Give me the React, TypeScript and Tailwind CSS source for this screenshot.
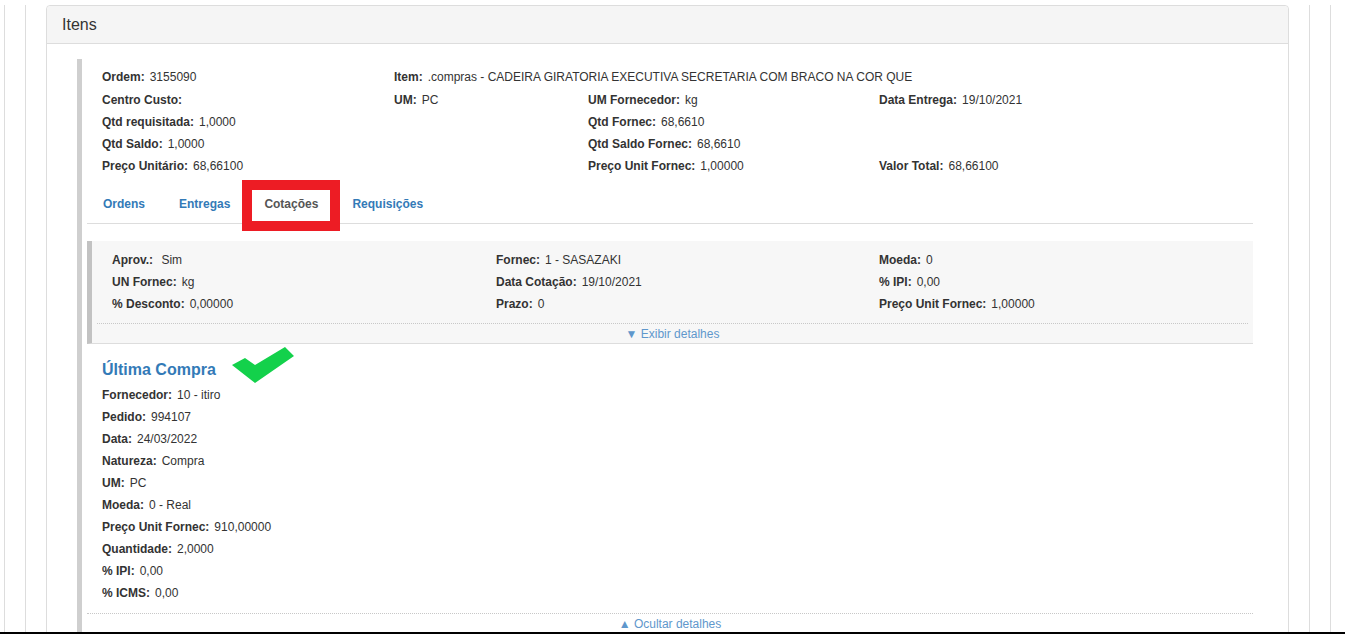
import React from 'react';

type Field = { label: string; value?: string; tall?: boolean };

const Item: React.FC<Field> = ({ label, value, tall }) => (
  <div className={`${tall ? 'h-[23px] leading-[22px]' : 'h-[22px] leading-[22px]'} whitespace-nowrap`}>
    <span className="font-bold">{label}</span>
    {value !== undefined && <span className="ml-[5px]">{value}</span>}
  </div>
);

const Empty = () => <div className="h-[22px]" />;

const tabs = ['Ordens', 'Entregas', 'Cotações', 'Requisições'];

const ultimaCompra: Field[] = [
  { label: 'Fornecedor:', value: '10 - itiro' },
  { label: 'Pedido:', value: '994107' },
  { label: 'Data:', value: '24/03/2022' },
  { label: 'Natureza:', value: 'Compra' },
  { label: 'UM:', value: 'PC' },
  { label: 'Moeda:', value: '0 - Real' },
  { label: 'Preço Unit Fornec:', value: '910,00000' },
  { label: 'Quantidade:', value: '2,0000' },
  { label: '% IPI:', value: '0,00' },
  { label: '% ICMS:', value: '0,00' },
];

export default function App() {
  return (
    <div
      className="h-[634px] flex flex-col overflow-hidden bg-white text-[12px] text-[#333]"
      style={{ fontFamily: '"Liberation Sans", Arial, sans-serif' }}
    >
      <div className="flex-1 min-h-0 overflow-hidden">
        <div className="ml-[4px] w-[1327px] h-full border-x border-[#ddd]">
          <div className="ml-[20px] w-[1285px] h-full border-x border-[#ddd]">
            <div className="mx-[20px] mt-[5px] border border-[#ddd] rounded-t-[4px]">
              {/* cabeçalho */}
              <div className="h-[38px] bg-[#f5f5f5] border-b border-[#ddd] px-[15px] flex items-center text-[16px] rounded-t-[4px]">
                Itens
              </div>

              <div className="pt-[15px] pl-[30px] pr-[35px]">
                <div className="border-l-[5px] border-[#cfcfcf]">
                  {/* dados do item */}
                  <div className="pl-[20px] pt-[7px] grid grid-cols-[292px_194px_291px_1fr]">
                    <Item label="Ordem:" value="3155090" tall />
                    <div className="col-span-3">
                      <Item label="Item:" value=".compras - CADEIRA GIRATORIA EXECUTIVA SECRETARIA COM BRACO NA COR QUE" tall />
                    </div>
                    <Item label="Centro Custo:" />
                    <Item label="UM:" value="PC" />
                    <Item label="UM Fornecedor:" value="kg" />
                    <Item label="Data Entrega:" value="19/10/2021" />
                    <Item label="Qtd requisitada:" value="1,0000" />
                    <Empty />
                    <Item label="Qtd Fornec:" value="68,6610" />
                    <Empty />
                    <Item label="Qtd Saldo:" value="1,0000" />
                    <Empty />
                    <Item label="Qtd Saldo Fornec:" value="68,6610" />
                    <Empty />
                    <Item label="Preço Unitário:" value="68,66100" />
                    <Empty />
                    <Item label="Preço Unit Fornec:" value="1,00000" />
                    <Item label="Valor Total:" value="68,66100" />
                  </div>

                  {/* abas */}
                  <div className="ml-[5px] mt-[8px] flex border-b border-[#ddd]">
                    {tabs.map((t) => {
                      const active = t === 'Cotações';
                      return (
                        <div
                          key={t}
                          className={`relative h-[38px] leading-[36px] px-[15px] mr-[2px] border border-transparent font-bold ${
                            active ? 'text-[#555] bg-white' : 'text-[#337ab7]'
                          }`}
                        >
                          {t}
                          {active && (
                            <div className="absolute left-[-7px] right-[-7px] top-[-6px] bottom-[-9px] border-[10px] border-[#ed1c24]" />
                          )}
                        </div>
                      );
                    })}
                  </div>

                  {/* cotação */}
                  <div className="ml-[5px] mt-[17px] bg-[#f7f7f7] border-l-[5px] border-l-[#c2c2c2] border-b border-b-[#ddd]">
                    <div className="pl-[20px] pt-[8px] grid grid-cols-[384px_383px_1fr]">
                      <Item label="Aprov.:" value={'\u00a0Sim'} />
                      <Item label="Fornec:" value="1 - SASAZAKI" />
                      <Item label="Moeda:" value="0" />
                      <Item label="UN Fornec:" value="kg" />
                      <Item label="Data Cotação:" value="19/10/2021" />
                      <Item label="% IPI:" value="0,00" />
                      <Item label="% Desconto:" value="0,00000" />
                      <Item label="Prazo:" value="0" />
                      <Item label="Preço Unit Fornec:" value="1,00000" />
                    </div>
                    <div className="mx-[5px] mt-[8px] border-t border-dotted border-[#c8c8c8]" />
                    <div className="h-[19px] leading-[21px] text-center text-[#5f97cc]">▼ Exibir detalhes</div>
                  </div>

                  {/* última compra */}
                  <div className="pl-[20px]">
                    <div className="relative mt-[16px] mb-[4px] h-[20px] leading-[20px] text-[16px] font-bold text-[#337ab7]">
                      Última Compra
                      <svg
                        className="absolute left-[129px] top-[-14px]"
                        width="64"
                        height="38"
                        viewBox="0 0 64 38"
                      >
                        <polygon points="1,19 14,12 24,19 54,1 63,10 24,37" fill="#13d14b" />
                      </svg>
                    </div>
                    {ultimaCompra.map((f) => (
                      <Item key={f.label} label={f.label} value={f.value} />
                    ))}
                  </div>
                  <div className="ml-[5px] mt-[9px] border-t border-dotted border-[#c8c8c8]" />
                  <div className="ml-[5px] h-[19px] leading-[20px] text-center text-[#5f97cc]">▲ Ocultar detalhes</div>
                  <div className="h-[40px]" />
                </div>
              </div>
            </div>
          </div>
        </div>
      </div>
      <div className="h-[2px] bg-black" />
    </div>
  );
}
